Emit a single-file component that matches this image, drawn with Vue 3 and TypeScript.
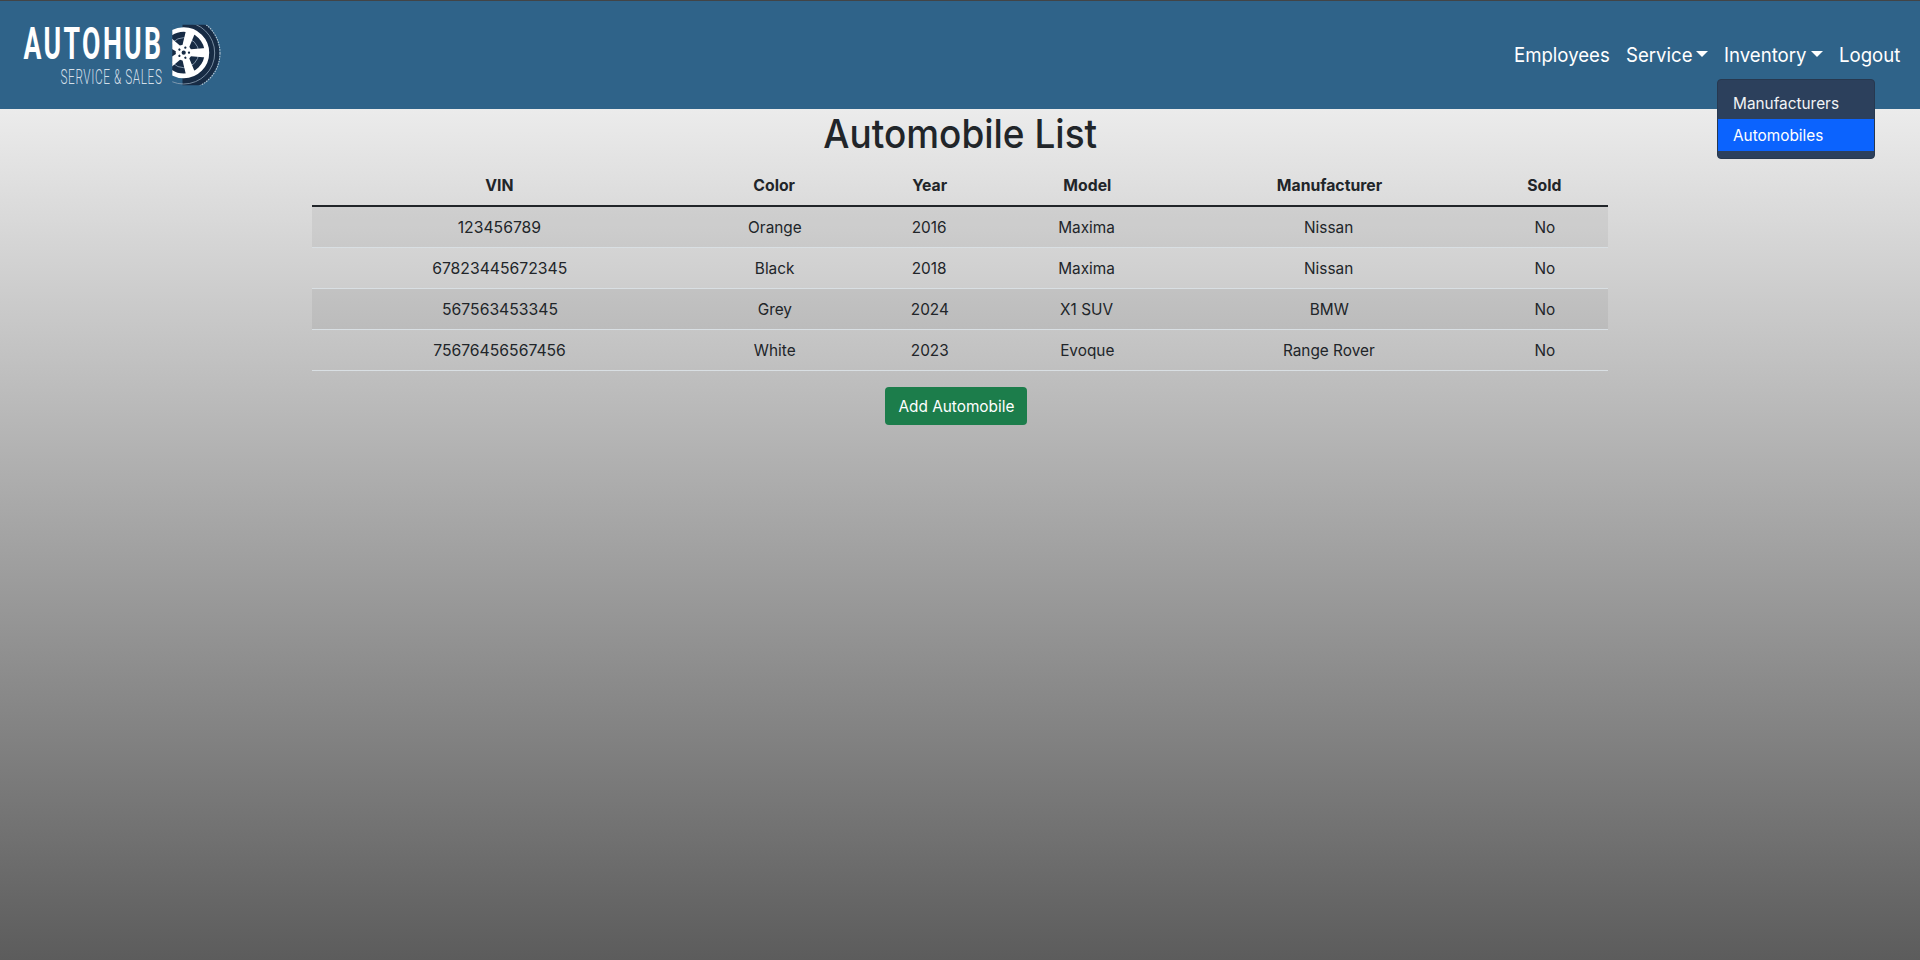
<script setup lang="ts">
interface Automobile {
  vin: string
  color: string
  year: number
  model: string
  manufacturer: string
  sold: boolean
}

const columns = ['VIN', 'Color', 'Year', 'Model', 'Manufacturer', 'Sold']
const automobiles: Automobile[] = [
  { vin: '123456789', color: 'Orange', year: 2016, model: 'Maxima', manufacturer: 'Nissan', sold: false },
  { vin: '67823445672345', color: 'Black', year: 2018, model: 'Maxima', manufacturer: 'Nissan', sold: false },
  { vin: '567563453345', color: 'Grey', year: 2024, model: 'X1 SUV', manufacturer: 'BMW', sold: false },
  { vin: '75676456567456', color: 'White', year: 2023, model: 'Evoque', manufacturer: 'Range Rover', sold: false },
]
const spokes = [0, 72, 144, 216, 288]
</script>

<template>
  <div class="page">
    <header class="navbar">
      <svg class="logo" width="220" height="70" viewBox="15 20 220 70" role="img" aria-label="AutoHub">
        <defs>
          <clipPath id="wheel-clip"><rect x="172.3" y="24.7" width="49" height="60.5" /></clipPath>
          <clipPath id="tire-clip"><rect x="182.5" y="24.7" width="40" height="60.5" /></clipPath>
        </defs>
        <text class="brand" x="23.5" y="59.3" textLength="140" lengthAdjust="spacingAndGlyphs">AUTOHUB</text>
        <text class="tagline" x="60.5" y="83.7" textLength="102" lengthAdjust="spacingAndGlyphs">SERVICE &amp; SALES</text>
        <g clip-path="url(#tire-clip)">
          <circle cx="183.7" cy="53.2" r="36" fill="#172b44" />
          <circle cx="183.7" cy="53.2" r="36.3" fill="none" stroke="#b4c4d1" stroke-width="1.1" stroke-dasharray="1.6 1" />
        </g>
        <g clip-path="url(#wheel-clip)">
          <circle cx="183.7" cy="53" r="31" fill="none" stroke="#91a5b7" stroke-width=".8" />
          <circle cx="183.7" cy="52.7" r="23.2" fill="#172b44" stroke="#fff" stroke-width="4.6" />
          <circle cx="183.7" cy="52.7" r="15" fill="none" stroke="#8194a8" stroke-width="1" />
          <circle cx="183.7" cy="52.7" r="8" fill="#fff" />
          <path
            v-for="angle in spokes"
            :key="angle"
            d="M188 49.4 L206 48 V57.4 L188 56 Z"
            fill="#fff"
            :transform="`rotate(${angle} 183.7 52.7)`"
          />
          <circle cx="183.7" cy="52.7" r="2.1" fill="#172b44" />
          <circle
            v-for="angle in spokes"
            :key="`bolt-${angle}`"
            cx="189"
            cy="52.7"
            r="1.15"
            fill="#172b44"
            :transform="`rotate(${angle} 183.7 52.7)`"
          />
        </g>
      </svg>
      <nav class="links">
        <a class="link employees"><span class="label">Employees</span></a>
        <a class="link service"><span class="label">Service</span><i class="caret"></i></a>
        <div class="link inventory">
          <span class="label">Inventory</span><i class="caret"></i>
          <div class="menu">
            <a class="item"><span class="label">Manufacturers</span></a>
            <a class="item active"><span class="label">Automobiles</span></a>
          </div>
        </div>
        <a class="link logout"><span class="label">Logout</span></a>
      </nav>
    </header>

    <main class="container">
      <h1><span class="text">Automobile List</span></h1>
      <table>
        <colgroup>
          <col class="c-vin" /><col class="c-color" /><col class="c-year" />
          <col class="c-model" /><col class="c-maker" /><col class="c-sold" />
        </colgroup>
        <thead>
          <tr>
            <th v-for="column in columns" :key="column"><span class="text">{{ column }}</span></th>
          </tr>
        </thead>
        <tbody>
          <tr v-for="auto in automobiles" :key="auto.vin">
            <td><span class="text vin">{{ auto.vin }}</span></td>
            <td><span class="text">{{ auto.color }}</span></td>
            <td><span class="text">{{ auto.year }}</span></td>
            <td><span class="text">{{ auto.model }}</span></td>
            <td><span class="text">{{ auto.manufacturer }}</span></td>
            <td><span class="text">{{ auto.sold ? 'Yes' : 'No' }}</span></td>
          </tr>
        </tbody>
      </table>
      <button type="button"><span class="text">Add Automobile</span></button>
    </main>
  </div>
</template>

<style>
body {
  margin: 0;
}
</style>

<style scoped>
.page {
  height: 960px;
  overflow: hidden;
  background: linear-gradient(#fefefe, #5c5c5c);
  color: #212529;
  font: 16px/24px Inter, 'Noto Sans', sans-serif;
}
.navbar {
  box-sizing: border-box;
  height: 109px;
  border-top: 1px solid #424446;
  background: #2f6389;
  display: flex;
  align-items: flex-start;
  justify-content: space-between;
  padding: 19px 20px 0 15px;
}
.logo {
  overflow: visible;
}
.brand {
  font: 700 45px Roboto, sans-serif;
  letter-spacing: 4px;
  fill: #fff;
}
.tagline {
  font: 300 20px Roboto, sans-serif;
  letter-spacing: 1px;
  fill: #d3dfe8;
}
.links {
  display: flex;
  padding-top: 20px;
  color: #fff;
  font-size: 20px;
  line-height: 30px;
}
.link {
  display: flex;
  position: relative;
  white-space: nowrap;
}
.label {
  display: inline-block;
  transform: scaleX(0.93);
  transform-origin: 0 50%;
}
.employees {
  width: 111.5px;
}
.service {
  width: 98px;
}
.inventory {
  width: 115px;
}
.logout {
  width: 61.5px;
}
.service .label {
  width: 70.5px;
}
.inventory > .label {
  width: 87px;
}
.caret {
  margin-top: 11px;
  width: 0;
  height: 0;
  border: 6px solid transparent;
  border-top-color: #fff;
  border-bottom: 0;
}
.menu {
  position: absolute;
  top: 39px;
  left: -7px;
  z-index: 2;
  box-sizing: border-box;
  width: 158.5px;
  height: 80px;
  padding-top: 7px;
  border: 1px solid #27384f;
  border-radius: 4px;
  background: #2c405c;
  font-size: 16px;
  line-height: 24px;
}
.item {
  display: block;
  padding: 4px 15px;
  color: #f2f4f6;
}
.item .label {
  transform: scaleX(0.96);
}
.item.active {
  background: #0b63fe;
  color: #fff;
}
.container {
  width: 1296px;
  margin: 0 auto;
  text-align: center;
}
.text {
  display: inline-block;
  transform: scaleX(0.96);
}
.vin {
  transform: scaleX(0.983);
}
h1 {
  margin: 0;
  padding: 1px 0 7px;
  font-size: 40px;
  line-height: 48px;
  font-weight: 500;
}
h1 .text {
  transform: scaleX(0.924);
}
table {
  width: 1296px;
  table-layout: fixed;
  border-collapse: separate;
  border-spacing: 0;
}
.c-vin {
  width: 375.5px;
}
.c-color {
  width: 174px;
}
.c-year {
  width: 136px;
}
.c-model {
  width: 179px;
}
.c-maker {
  width: 305px;
}
.c-sold {
  width: 126.5px;
}
th,
td {
  padding: 8px;
  white-space: nowrap;
}
th {
  border-bottom: 2px solid #212529;
  font-weight: 700;
}
th .text {
  transform: scaleX(0.985);
}
td {
  border-bottom: 1px solid #d9dfe3;
}
tbody tr:nth-child(odd) td {
  background: rgba(0, 0, 0, 0.05);
}
button {
  display: block;
  width: 142px;
  height: 38px;
  margin: 16px auto 0 573px;
  padding: 0;
  border: 0;
  border-radius: 4px;
  background: #1c7d4b;
  color: #fff;
  font: inherit;
}
</style>
